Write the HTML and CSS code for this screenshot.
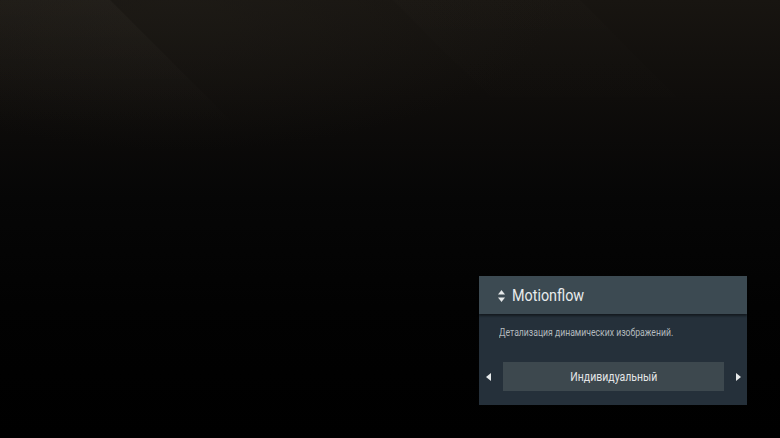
FILE: index.html
```html
<!DOCTYPE html>
<html lang="ru">
<head>
<meta charset="utf-8">
<title>Motionflow</title>
<link rel="stylesheet" href="styles.css">
</head>
<body>
<div class="screen">
  <div class="sheen sheen-a"></div>
  <div class="sheen sheen-b"></div>
  <div class="stage">
    <section class="panel">
      <header class="panel-head">
        <svg class="updown" width="7" height="12" viewBox="0 0 7 12">
          <path d="M3.5 0 L7 4.5 L0 4.5 Z" fill="#e6e9ea"/>
          <path d="M0 7.5 L7 7.5 L3.5 12 Z" fill="#e6e9ea"/>
        </svg>
        <h1 class="panel-title"><span class="narrow">Motionflow</span></h1>
      </header>
      <p class="panel-desc"><span class="narrow">Детализация динамических изображений.</span></p>
      <div class="selector">
        <svg class="arrow" width="5" height="8" viewBox="0 0 5 8"><path d="M5 0 L5 8 L0 4 Z" fill="#e6e9ea"/></svg>
        <div class="value"><span class="narrow">Индивидуальный</span></div>
        <svg class="arrow" width="5" height="8" viewBox="0 0 5 8"><path d="M0 0 L5 4 L0 8 Z" fill="#e6e9ea"/></svg>
      </div>
    </section>
  </div>
</div>
</body>
</html>
```
FILE: styles.css
```css
* { box-sizing: border-box; }

html, body {
  margin: 0;
  padding: 0;
  width: 780px;
  height: 438px;
  overflow: hidden;
  background: #000;
}

.screen {
  position: relative;
  width: 780px;
  height: 438px;
  background:
    radial-gradient(ellipse 380px 150px at 180px 0px, rgba(34, 31, 26, 0.5), rgba(0, 0, 0, 0) 100%),
    linear-gradient(180deg, #181511 0%, #0f0d0b 22%, #060606 45%, #020202 70%, #000 100%);
  font-family: Roboto, "Noto Sans", sans-serif;
  overflow: hidden;
}

/* soft diagonal glass reflections in the backdrop, fading downward */
.sheen {
  position: absolute;
  top: 0;
  left: 0;
  height: 130px;
  background: linear-gradient(180deg, rgba(255, 238, 215, 0.028), rgba(255, 238, 215, 0) 100%);
}
.sheen-a {
  width: 260px;
  clip-path: polygon(0 0, 110px 0, 240px 130px, 0 130px);
}
.sheen-b {
  width: 720px;
  opacity: 0.3;
  clip-path: polygon(393px 0, 580px 0, 710px 130px, 523px 130px);
}

.stage {
  position: relative;
  height: 100%;
  display: flex;
  justify-content: flex-end;
  align-items: flex-end;
  padding: 0 33px 33px 0;
}

.panel {
  width: 268px;
  height: 129px;
  background: #25303a;
  display: flex;
  flex-direction: column;
}

.panel-head {
  height: 38px;
  background: #3c4a52;
  display: flex;
  align-items: center;
  padding: 1px 0 0 19px;
  gap: 7px;
  box-shadow: 0 2px 2px rgba(0, 0, 0, 0.45);
  position: relative;
}

.updown { display: block; }

/* the TV menu face is a condensed sans */
.narrow {
  display: inline-block;
  transform: scaleX(0.86);
  transform-origin: 0 50%;
  white-space: nowrap;
}

.panel-title {
  margin: 0;
  font-size: 16.5px;
  font-weight: 400;
  color: #e8ebec;
}
.panel-title .narrow { transform: scaleX(0.87); }

.panel-desc {
  margin: 13px 0 0 20px;
  font-size: 10px;
  color: #b3babe;
  line-height: 12px;
}
.panel-desc .narrow { transform: scaleX(0.865); }

.selector {
  margin-top: 23px;
  display: flex;
  align-items: center;
  padding: 0 6px 0 7px;
  gap: 12px;
}

.arrow { display: block; flex: none; }

.value {
  flex: 1;
  height: 29px;
  background: #3d484e;
  color: #e4e6e7;
  font-size: 12.5px;
  display: flex;
  align-items: center;
  justify-content: center;
}
.value .narrow { transform: scaleX(0.84); transform-origin: 50% 50%; }
```
